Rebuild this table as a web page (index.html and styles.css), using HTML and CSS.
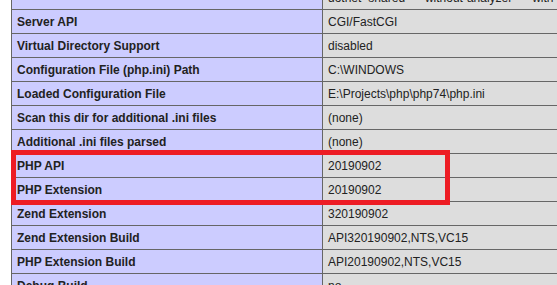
FILE: index.html
```html
<!DOCTYPE html>
<html>
<head>
<meta charset="utf-8">
<link rel="stylesheet" href="styles.css">
</head>
<body>
<div class="page">
  <table class="info">
    <tr><td class="e">&nbsp;</td><td class="v">dotnet=shared" "--without-analyzer" "--with-pgo"</td></tr>
    <tr><td class="e">Server API </td><td class="v">CGI/FastCGI </td></tr>
    <tr><td class="e">Virtual Directory Support </td><td class="v">disabled </td></tr>
    <tr><td class="e">Configuration File (php.ini) Path </td><td class="v">C:\WINDOWS </td></tr>
    <tr><td class="e">Loaded Configuration File </td><td class="v">E:\Projects\php\php74\php.ini </td></tr>
    <tr><td class="e">Scan this dir for additional .ini files </td><td class="v">(none) </td></tr>
    <tr><td class="e">Additional .ini files parsed </td><td class="v">(none) </td></tr>
    <tr><td class="e">PHP API </td><td class="v">20190902 </td></tr>
    <tr><td class="e">PHP Extension </td><td class="v">20190902 </td></tr>
    <tr><td class="e">Zend Extension </td><td class="v">320190902 </td></tr>
    <tr><td class="e">Zend Extension Build </td><td class="v">API320190902,NTS,VC15 </td></tr>
    <tr><td class="e">PHP Extension Build </td><td class="v">API20190902,NTS,VC15 </td></tr>
    <tr><td class="e">Debug Build </td><td class="v">no </td></tr>
  </table>
  <div class="highlight"></div>
</div>
</body>
</html>
```
FILE: styles.css
```css
html, body {
  margin: 0;
  padding: 0;
  background: #fff;
  overflow: hidden;
}
.page {
  position: relative;
  width: 557px;
  height: 285px;
  overflow: hidden;
  padding-left: 11px;
  box-sizing: border-box;
  font-family: "Liberation Sans", Arial, sans-serif;
  color: #222;
}
.info {
  border-collapse: collapse;
  border: 0;
  width: 934px;
  margin-top: -15px;
}
.info td {
  border: 1px solid #666;
  font-size: 12px;
  line-height: 15px;
  vertical-align: baseline;
  padding: 5px 5px 3px;
  white-space: nowrap;
}
.e {
  background-color: #ccf;
  width: 300px;
  font-weight: bold;
}
.v {
  background-color: #ddd;
}
.highlight {
  position: absolute;
  left: 11px;
  top: 150px;
  width: 439px;
  height: 55px;
  box-sizing: border-box;
  border: 5px solid #ed1c24;
}
```
